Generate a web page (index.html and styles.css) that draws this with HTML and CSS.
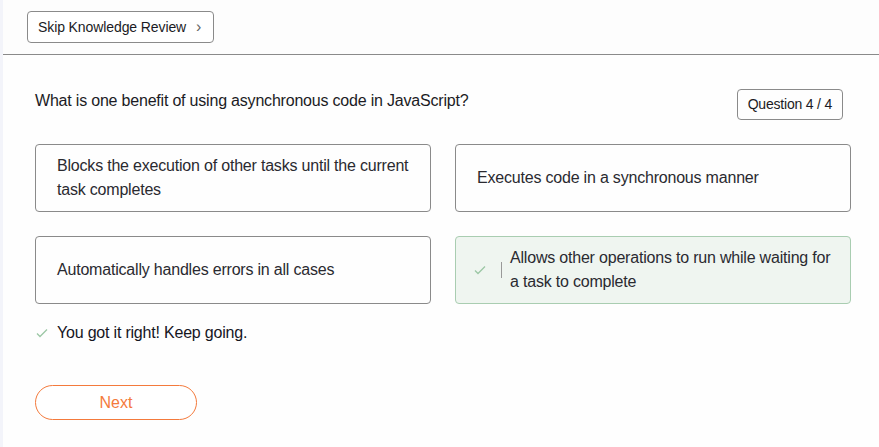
FILE: index.html
```html
<!DOCTYPE html>
<html>
<head>
<meta charset="utf-8">
<link rel="stylesheet" href="styles.css">
</head>
<body>
<div class="page">
  <header class="topbar">
    <button class="skip">Skip Knowledge Review <span class="chev">&#8250;</span></button>
  </header>
  <main class="content">
    <div class="qrow">
      <p class="question">What is one benefit of using asynchronous code in JavaScript?</p>
      <span class="badge">Question 4 / 4</span>
    </div>
    <div class="options">
      <div class="option"><span>Blocks the execution of other tasks until the current task completes</span></div>
      <div class="option"><span>Executes code in a synchronous manner</span></div>
      <div class="option"><span>Automatically handles errors in all cases</span></div>
      <div class="option correct">
        <svg class="check" width="14" height="14" viewBox="0 0 14 14"><path d="M2 7.5l3 3 7-7" fill="none" stroke="#9cc7a5" stroke-width="1.3"/></svg>
        <span class="bar"></span>
        <span>Allows other operations to run while waiting for a task to complete</span>
      </div>
    </div>
    <div class="feedback">
      <svg class="fcheck" width="14" height="14" viewBox="0 0 14 14"><path d="M2 7.5l3 3 7-7" fill="none" stroke="#9cc7a5" stroke-width="1.3"/></svg>
      <span>You got it right! Keep going.</span>
    </div>
    <button class="next">Next</button>
  </main>
</div>
</body>
</html>
```
FILE: styles.css
```css
html, body {
  margin: 0;
  padding: 0;
  background: #fff;
}
body {
  font-family: "Liberation Sans", Arial, sans-serif;
  color: #1b1b24;
  letter-spacing: -0.2px;
}
.page {
  width: 879px;
  height: 447px;
  border-left: 3px solid #f3f4fa;
  box-sizing: border-box;
  background: #fefefe;
}
.topbar {
  height: 55px;
  border-bottom: 1px solid #8a8a8a;
  padding: 11px 0 0 24px;
  box-sizing: border-box;
  background: #fdfdfd;
}
.skip {
  height: 32px;
  padding: 0 12px 0 10px;
  border: 1px solid #8a8a8a;
  border-radius: 4px;
  background: #fff;
  font-family: inherit;
  font-size: 14px;
  letter-spacing: -0.1px;
  color: #1b1b24;
  display: flex;
  align-items: center;
  gap: 10px;
}
.chev {
  font-size: 16px;
  color: #666;
}
.content {
  padding: 34px 28px 0 32px;
}
.qrow {
  display: flex;
  justify-content: space-between;
  align-items: flex-start;
}
.question {
  margin: 3px 0 0;
  font-size: 16px;
}
.badge {
  border: 1px solid #8a8a8a;
  border-radius: 4px;
  padding: 6px 10px 7px;
  font-size: 14px;
  margin-right: 8px;
}
.options {
  display: grid;
  grid-template-columns: 396px 396px;
  column-gap: 24px;
  row-gap: 24px;
  margin-top: 24px;
}
.option {
  height: 68px;
  box-sizing: border-box;
  border: 1px solid #8a8a8a;
  border-radius: 4px;
  display: flex;
  align-items: center;
  padding: 0 20px 0 21px;
  font-size: 16px;
  line-height: 24px;
  color: #2a2a30;
}
.option.correct {
  background: #eff5f0;
  border-color: #a9cdb1;
  padding-left: 17px;
  padding-right: 10px;
}
.check {
  flex: none;
  margin-right: 14px;
}
.bar {
  flex: none;
  width: 1px;
  height: 16px;
  background: #999;
  margin-right: 8px;
}
.feedback {
  display: flex;
  align-items: center;
  gap: 8px;
  margin-top: 20px;
  font-size: 16px;
  color: #15151e;
}
.next {
  margin-top: 43px;
  width: 162px;
  height: 35px;
  border: 1px solid #f47a3c;
  border-radius: 18px;
  background: #fff;
  color: #f47a3c;
  font-family: inherit;
  font-size: 16px;
}
```
